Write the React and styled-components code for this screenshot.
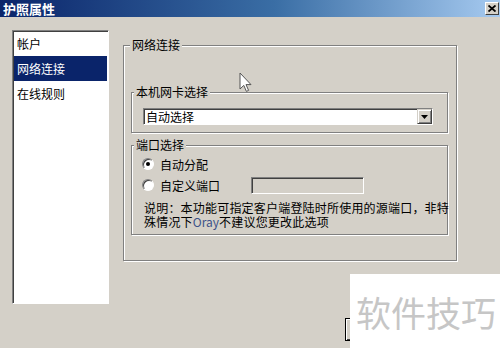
import React from "react";
import styled, { createGlobalStyle } from "styled-components";

const Global = createGlobalStyle`
  html, body {
    margin: 0;
    padding: 0;
    width: 500px;
    height: 348px;
    overflow: hidden;
    background: #d4d0c8;
  }
  body {
    font-family: "Noto Sans CJK SC", "Noto Sans", sans-serif;
    font-size: 12px;
    color: #000;
  }
`;

const Window = styled.div`
  position: relative;
  width: 500px;
  height: 348px;
  display: flex;
  flex-direction: column;
  background: #d4d0c8;
  overflow: hidden;
`;

const TitleBar = styled.div`
  height: 17px;
  display: flex;
  align-items: center;
  justify-content: space-between;
  padding: 0 1px 0 3px;
  background: linear-gradient(90deg, #0a246a 0%, #3a6ea5 55%, #a6caf0 100%);
`;

const Title = styled.span`
  color: #fff;
  font-weight: bold;
  font-size: 13px;
  line-height: 17px;
`;

const CloseButton = styled.div`
  width: 14px;
  height: 13px;
  box-sizing: border-box;
  background: #d4d0c8;
  border: 1px solid;
  border-color: #fff #404040 #404040 #fff;
  display: flex;
  align-items: center;
  justify-content: center;
`;

const Body = styled.div`
  display: flex;
  align-items: flex-start;
  padding: 13px 0 0 12px;
  gap: 14px;
`;

const NavList = styled.ul`
  list-style: none;
  margin: 0;
  padding: 0 1px;
  width: 97px;
  height: 274px;
  box-sizing: border-box;
  background: #fff;
  border: 1px solid;
  border-color: #808080 #fff #fff #808080;
  box-shadow: inset 1px 1px 0 #404040;
`;

const NavItem = styled.li`
  height: 25px;
  line-height: 25px;
  padding-left: 3px;
  font-size: 12px;
  background: ${(p) => (p.$active ? "#0a246a" : "transparent")};
  color: ${(p) => (p.$active ? "#fff" : "#000")};
`;

const Group = styled.div`
  position: relative;
  box-sizing: border-box;
  border: 1px solid #808080;
  box-shadow: inset 1px 1px 0 #fff, 1px 1px 0 #fff;
  display: flex;
  flex-direction: column;
`;

const OuterGroup = styled(Group)`
  margin-top: 15px;
  width: 334px;
  height: 216px;
  padding: 46px 8px 0 7px;
  gap: 12px;
`;

const InnerGroup = styled(Group)`
  height: ${(p) => p.$h}px;
  padding: ${(p) => p.$pad};
`;

const Legend = styled.span`
  position: absolute;
  top: -8px;
  left: ${(p) => p.$left}px;
  padding: 0 2px;
  background: #d4d0c8;
  line-height: 14px;
  font-size: 12px;
`;

const Select = styled.div`
  width: 290px;
  height: 17px;
  box-sizing: border-box;
  background: #fff;
  border: 1px solid;
  border-color: #808080 #fff #fff #808080;
  box-shadow: inset 1px 1px 0 #404040;
  display: flex;
  align-items: center;
  justify-content: space-between;
  padding-left: 2px;
`;

const SelectText = styled.span`
  line-height: 15px;
  font-size: 12px;
`;

const SelectButton = styled.div`
  width: 15px;
  height: 15px;
  box-sizing: border-box;
  background: #d4d0c8;
  border: 1px solid;
  border-color: #d4d0c8 #404040 #404040 #d4d0c8;
  box-shadow: inset 1px 1px 0 #fff, inset -1px -1px 0 #808080;
  display: flex;
  align-items: center;
  justify-content: center;
`;

const Row = styled.div`
  height: ${(p) => p.$h || 20}px;
  display: flex;
  align-items: center;
  padding-left: 10px;
`;

const Radio = styled.span`
  width: 12px;
  height: 12px;
  box-sizing: border-box;
  border-radius: 50%;
  background: #fff;
  border: 1px solid;
  border-color: #808080 #fff #fff #808080;
  box-shadow: inset 1px 1px 0 #404040;
  display: flex;
  align-items: center;
  justify-content: center;
  margin-right: 6px;
  &::after {
    content: "";
    width: 4px;
    height: 4px;
    border-radius: 50%;
    background: ${(p) => (p.$checked ? "#000" : "transparent")};
  }
`;

const RadioLabel = styled.span`
  font-size: 12px;
  width: ${(p) => (p.$w ? p.$w + "px" : "auto")};
`;

const PortInput = styled.div`
  width: 113px;
  height: 17px;
  box-sizing: border-box;
  background: #d4d0c8;
  border: 1px solid;
  border-color: #808080 #fff #fff #808080;
  box-shadow: inset 1px 1px 0 #404040;
`;

const Note = styled.p`
  margin: 5px 0 0 12px;
  font-size: 12px;
  line-height: 14px;
  letter-spacing: 0.2px;
  white-space: nowrap;
`;

const Brand = styled.span`
  color: #3d5288;
  letter-spacing: 0;
`;

const Footer = styled.div`
  display: flex;
  justify-content: flex-end;
  gap: 6px;
  padding: 14px 5px 0 0;
`;

const Button = styled.div`
  width: 72px;
  height: 23px;
  box-sizing: border-box;
  background: #d4d0c8;
  border: 1px solid #000;
  box-shadow: inset 1px 1px 0 #fff, inset -1px -1px 0 #404040;
`;

const Watermark = styled.div`
  position: absolute;
  left: 350px;
  top: 274px;
  width: 150px;
  height: 74px;
  background: #fff;
  display: flex;
  align-items: center;
  padding-left: 6px;
  box-sizing: border-box;
  color: #c6c6c6;
  font-size: 35px;
`;

const Cursor = styled.svg`
  position: absolute;
  left: 239px;
  top: 72px;
`;

export default function App() {
  return (
    <>
      <Global />
      <Window>
        <TitleBar>
          <Title>护照属性</Title>
          <CloseButton>
            <svg width="8" height="7" viewBox="0 0 8 7">
              <path d="M0.5 0.5 L7.5 6.5 M7.5 0.5 L0.5 6.5" stroke="#000" strokeWidth="1.8" />
            </svg>
          </CloseButton>
        </TitleBar>
        <Body>
          <NavList>
            <NavItem>帐户</NavItem>
            <NavItem $active>网络连接</NavItem>
            <NavItem>在线规则</NavItem>
          </NavList>
          <OuterGroup>
            <Legend $left={6}>网络连接</Legend>
            <InnerGroup $h={41} $pad="15px 0 0 11px">
              <Legend $left={2}>本机网卡选择</Legend>
              <Select>
                <SelectText>自动选择</SelectText>
                <SelectButton>
                  <svg width="7" height="4" viewBox="0 0 7 4">
                    <path d="M0 0 H7 L3.5 4 Z" fill="#000" />
                  </svg>
                </SelectButton>
              </Select>
            </InnerGroup>
            <InnerGroup $h={90} $pad="8px 0 0 0">
              <Legend $left={2}>端口选择</Legend>
              <Row>
                <Radio $checked />
                <RadioLabel>自动分配</RadioLabel>
              </Row>
              <Row $h={22}>
                <Radio />
                <RadioLabel $w={91}>自定义端口</RadioLabel>
                <PortInput />
              </Row>
              <Note>
                说明：本功能可指定客户端登陆时所使用的源端口，非特
                <br />
                殊情况下<Brand>Oray</Brand>不建议您更改此选项
              </Note>
            </InnerGroup>
          </OuterGroup>
        </Body>
        <Footer>
          <Button />
          <Button />
        </Footer>
        <Watermark>软件技巧</Watermark>
        <Cursor width="13" height="21" viewBox="0 0 13 21">
          <path
            d="M1 1 L1 17 L4.8 13.4 L7.4 19.4 L9.6 18.4 L7 12.6 L12 12.6 Z"
            fill="#fff"
            stroke="#555"
            strokeWidth="1"
            strokeLinejoin="round"
          />
        </Cursor>
      </Window>
    </>
  );
}
